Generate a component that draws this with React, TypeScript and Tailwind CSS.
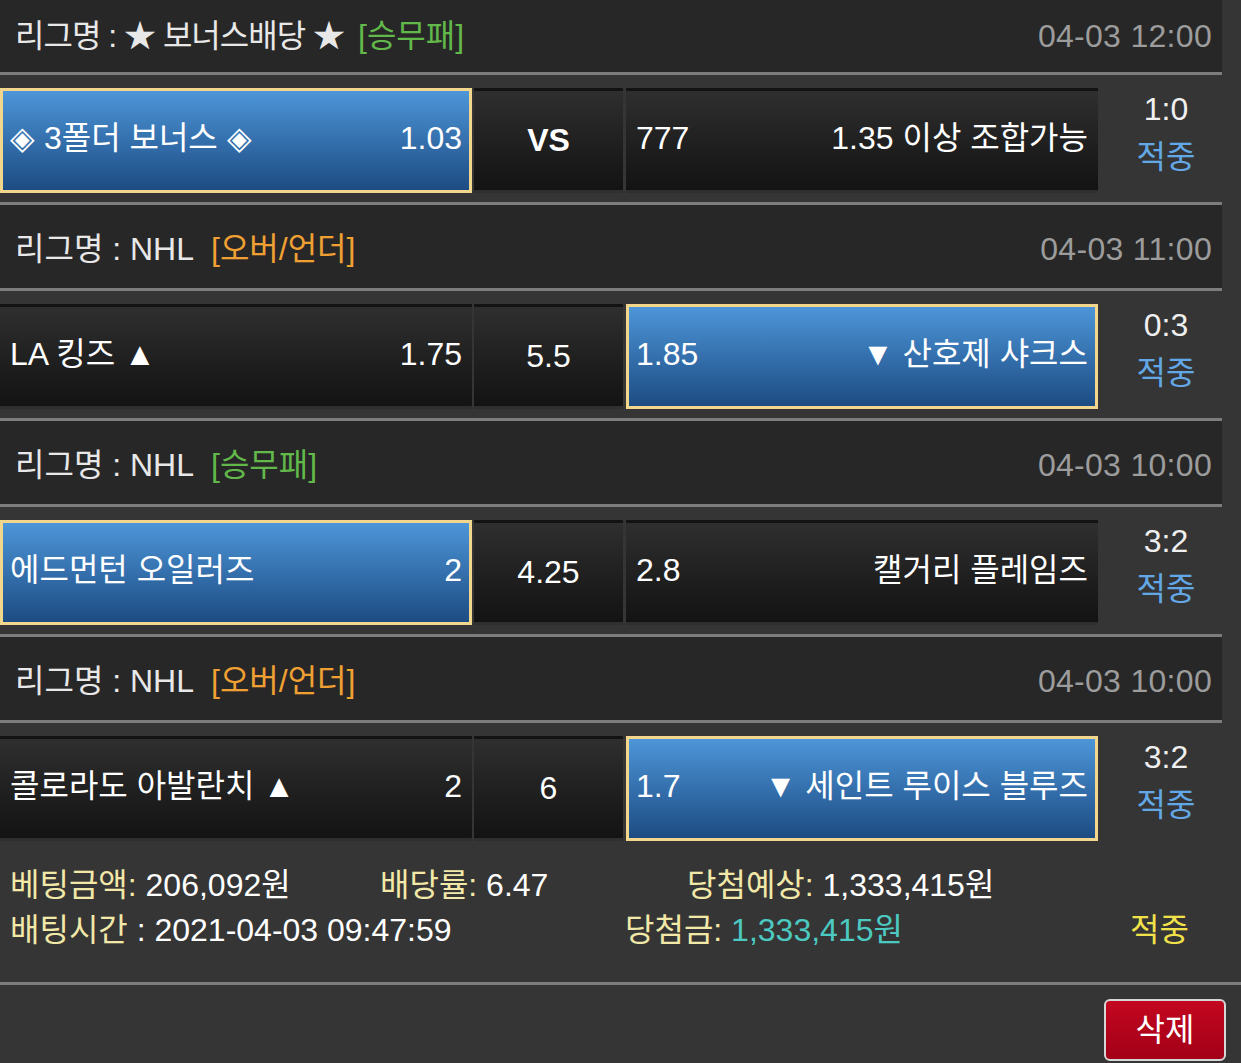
import React from "react";

type Match = {
  league: string;
  type: string;
  typeColor: string;
  date: string;
  home: string;
  homeOdds: string;
  draw: string;
  drawBold?: boolean;
  awayOdds: string;
  away: string;
  score: string;
  pick: "home" | "away";
};

const matches: Match[] = [
  {
    league: "★ 보너스배당 ★",
    type: "[승무패]",
    typeColor: "text-[#62b84a]",
    date: "04-03 12:00",
    home: "◈ 3폴더 보너스 ◈",
    homeOdds: "1.03",
    draw: "VS",
    drawBold: true,
    awayOdds: "777",
    away: "1.35 이상 조합가능",
    score: "1:0",
    pick: "home",
  },
  {
    league: "NHL",
    type: "[오버/언더]",
    typeColor: "text-[#f0a033]",
    date: "04-03 11:00",
    home: "LA 킹즈 ▲",
    homeOdds: "1.75",
    draw: "5.5",
    awayOdds: "1.85",
    away: "▼ 산호제 샤크스",
    score: "0:3",
    pick: "away",
  },
  {
    league: "NHL",
    type: "[승무패]",
    typeColor: "text-[#62b84a]",
    date: "04-03 10:00",
    home: "에드먼턴 오일러즈",
    homeOdds: "2",
    draw: "4.25",
    awayOdds: "2.8",
    away: "캘거리 플레임즈",
    score: "3:2",
    pick: "home",
  },
  {
    league: "NHL",
    type: "[오버/언더]",
    typeColor: "text-[#f0a033]",
    date: "04-03 10:00",
    home: "콜로라도 아발란치 ▲",
    homeOdds: "2",
    draw: "6",
    awayOdds: "1.7",
    away: "▼ 세인트 루이스 블루즈",
    score: "3:2",
    pick: "away",
  },
];

const selCls =
  "border-[3px] border-[#f2d68c] bg-gradient-to-b from-[#4d96d9] to-[#1d4c83]";
const normCls =
  "border-[3px] border-transparent bg-gradient-to-b from-[#2f2f2f] to-[#131313]";

function Sep() {
  return <div className="h-[3px] bg-[#7d7d7d]" />;
}

function Header({ m, first }: { m: Match; first: boolean }) {
  return (
    <div
      className={`flex items-center justify-between bg-[#272727] pl-[15px] pr-[10px] ${
        first ? "h-[72px]" : "h-[83px] pt-[4px]"
      }`}
    >
      <div className="flex items-center whitespace-nowrap">
        <span className={`text-[#e8e8e8] ${first ? "tracking-[-1px]" : ""}`}>
          리그명 : {m.league}
        </span>
        <span className={`${first ? "ml-[14px]" : "ml-[17px]"} ${m.typeColor}`}>
          {m.type}
        </span>
      </div>
      <span className="text-[#9c9c9c] tracking-[0.3px]">{m.date}</span>
    </div>
  );
}

function BetRow({ m }: { m: Match }) {
  return (
    <div className="flex pt-[13px] pb-[9px]">
      <div
        className={`flex h-[105px] w-[472px] items-center justify-between px-[7px] pb-[5px] text-white ${
          m.pick === "home" ? selCls : normCls
        }`}
      >
        <span className="whitespace-nowrap">{m.home}</span>
        <span>{m.homeOdds}</span>
      </div>
      <div
        className={`ml-[2px] flex h-[105px] w-[149px] items-center justify-center pb-[1px] text-white ${normCls} ${
          m.drawBold ? "font-bold" : ""
        }`}
      >
        {m.draw}
      </div>
      <div
        className={`ml-[3px] flex h-[105px] w-[472px] items-center justify-between px-[7px] pb-[5px] text-white ${
          m.pick === "away" ? selCls : normCls
        }`}
      >
        <span>{m.awayOdds}</span>
        <span className="whitespace-nowrap">{m.away}</span>
      </div>
      <div className="flex h-[105px] flex-1 flex-col items-center justify-center pb-[16px] pl-[12px] leading-[48px]">
        <span className="text-[#f0f0f0]">{m.score}</span>
        <span className="text-[#62a8e6]">적중</span>
      </div>
    </div>
  );
}

export default function App() {
  return (
    <div
      className="h-[1063px] w-[1241px] overflow-hidden bg-[#353535] text-[32px] leading-none"
      style={{ fontFamily: '"Liberation Sans", "Noto Sans CJK KR", sans-serif' }}
    >
      <div className="w-[1222px]">
        {matches.map((m, i) => (
          <React.Fragment key={i}>
            {i > 0 && <Sep />}
            <Header m={m} first={i === 0} />
            <Sep />
            <BetRow m={m} />
          </React.Fragment>
        ))}
      </div>
      <div className="h-[132px] pl-[10px] pt-[13px] leading-[45px]">
        <div className="flex whitespace-nowrap">
          <span className="w-[370px]">
            <span className="text-[#f2e8a8]">베팅금액: </span>
            <span className="text-white">206,092원</span>
          </span>
          <span className="w-[307px]">
            <span className="text-[#f2e8a8]">배당률: </span>
            <span className="text-white">6.47</span>
          </span>
          <span>
            <span className="text-[#f2e8a8]">당첨예상: </span>
            <span className="text-white">1,333,415원</span>
          </span>
        </div>
        <div className="flex whitespace-nowrap">
          <span className="w-[615px]">
            <span className="text-[#f2e8a8]">배팅시간</span>
            <span className="text-white"> : 2021-04-03 09:47:59</span>
          </span>
          <span className="w-[505px]">
            <span className="text-[#f2e8a8]">당첨금: </span>
            <span className="text-[#4ccac2]">1,333,415원</span>
          </span>
          <span className="text-[#f2e24a]">적중</span>
        </div>
      </div>
      <div className="h-[3px] bg-[#7d7d7d]" />
      <div className="flex justify-end pr-[15px] pt-[14px]">
        <div className="flex h-[62px] w-[122px] items-center justify-center rounded-[6px] border-[2px] border-[#d6d6d6] bg-gradient-to-b from-[#c3081f] to-[#a20018] text-white">
          삭제
        </div>
      </div>
    </div>
  );
}
